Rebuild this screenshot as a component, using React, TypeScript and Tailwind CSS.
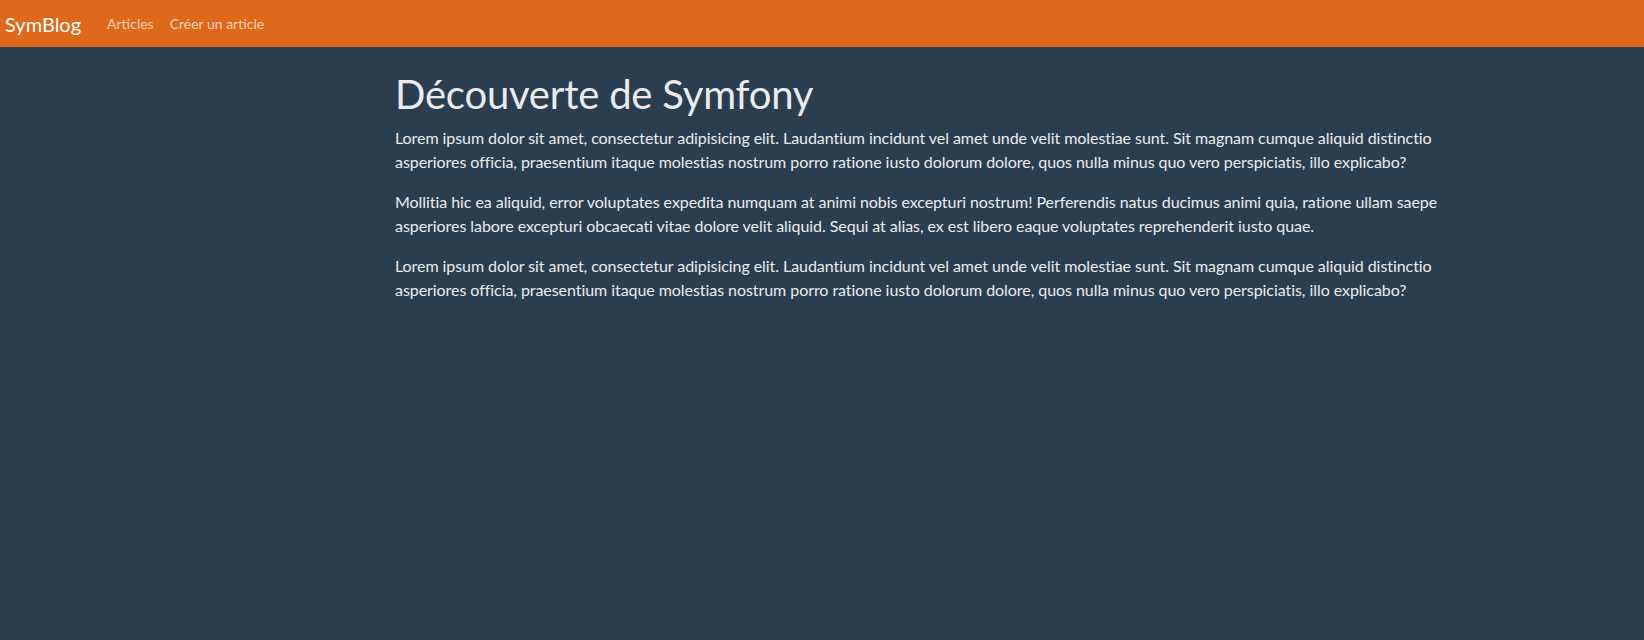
import React from 'react';

const LOREM =
    'Lorem ipsum dolor sit amet, consectetur adipisicing elit. Laudantium incidunt vel amet unde velit molestiae sunt. Sit magnam cumque aliquid distinctio asperiores officia, praesentium itaque molestias nostrum porro ratione iusto dolorum dolore, quos nulla minus quo vero perspiciatis, illo explicabo?';

const MOLLITIA =
    'Mollitia hic ea aliquid, error voluptates expedita numquam at animi nobis excepturi nostrum! Perferendis natus ducimus animi quia, ratione ullam saepe asperiores labore excepturi obcaecati vitae dolore velit aliquid. Sequi at alias, ex est libero eaque voluptates reprehenderit iusto quae.';

export default function App() {
    return (
        <div className="min-h-[640px] bg-[#2b3e50] text-[#ebebeb] font-['Lato',sans-serif]">
            {/* Navbar */}
            <nav className="flex h-[47px] items-center bg-[#df691a] px-[5px]">
                <a href="#" className="mr-[26px] text-[20px] leading-none text-white">
                    SymBlog
                </a>
                <a href="#" className="mr-[16px] text-[14px] text-white/70">
                    Articles
                </a>
                <a href="#" className="text-[14px] text-white/70">
                    Créer un article
                </a>
            </nav>

            {/* Article */}
            <main className="pl-[395px]">
                <div className="w-[1100px]">
                    <h1 className="mt-[23px] mb-[8px] text-[40px] leading-[1.2] font-normal tracking-[-0.2px]">
                        Découverte de Symfony
                    </h1>
                    <p className="mb-[16px] text-[16px] leading-[24px] tracking-[-0.06px]">{LOREM}</p>
                    <p className="mb-[16px] text-[16px] leading-[24px] tracking-[-0.06px]">{MOLLITIA}</p>
                    <p className="mb-[16px] text-[16px] leading-[24px] tracking-[-0.06px]">{LOREM}</p>
                </div>
            </main>
        </div>
    );
}
